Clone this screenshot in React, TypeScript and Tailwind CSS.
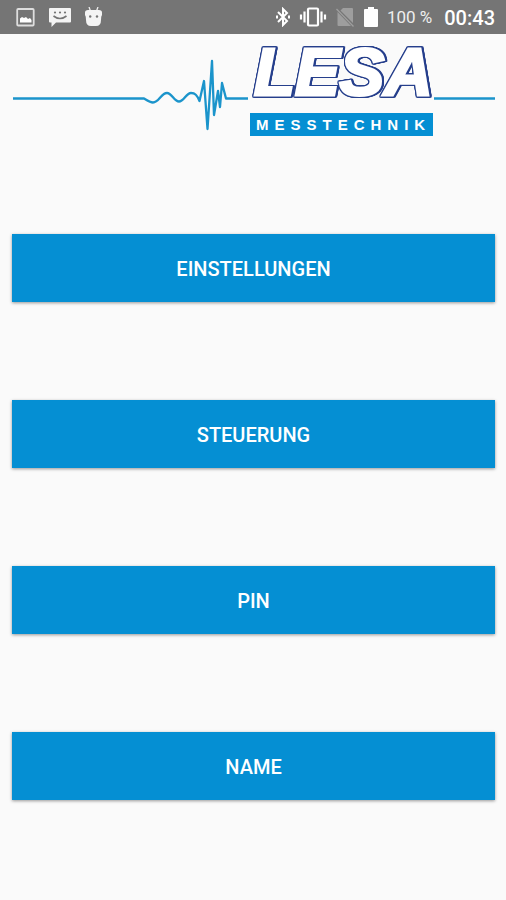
const menuItems = ["Einstellungen", "Steuerung", "PIN", "Name"];

function StatusBar() {
  return (
    <div className="flex h-[34px] items-center justify-between bg-[#757575] pl-4 pr-[11px] text-white">
      {/* notifications */}
      <div className="flex items-center gap-3">
        <svg className="h-5 w-5" viewBox="0 0 20 20" fill="none">
          <rect x="1.2" y="2" width="16.500" height="16.500" rx="1" stroke="#dedede" strokeWidth="1.800" />
          <path d="M4 15.500v-4l2-1.500 2 1 2-1 2 2 2-1 1.500 2v2.500z" fill="#fff" />
        </svg>
        <svg className="h-5 w-6" viewBox="0 0 24 20">
          <path d="M2 1h20a1 1 0 0 1 1 1v12.500a1 1 0 0 1-1 1H8L3.500 20v-4.500H2a1 1 0 0 1-1-1V2a1 1 0 0 1 1-1z" fill="#f4f4f4" />
          <circle cx="7" cy="5.500" r="1.100" fill="#757575" />
          <circle cx="12" cy="5.500" r="1.100" fill="#757575" />
          <circle cx="17" cy="5.500" r="1.100" fill="#757575" />
          <path d="M5.500 9q6.500 5 13 0" fill="none" stroke="#757575" strokeWidth="1.600" />
        </svg>
        <svg className="h-5 w-5" viewBox="0 0 20 20">
          <path d="M5 0l1.500 4M14 0l-1.500 4" stroke="#eee" strokeWidth="1.300" />
          <path d="M1 5.500q0-2.500 3-2.500h11q3 0 3 2.500v2.500q-1 1-1 5 0 6-5 6H7q-5 0-5-6 0-4-1-5z" fill="#f4f4f4" />
          <circle cx="6.200" cy="9.500" r="1.200" fill="#757575" />
          <circle cx="13" cy="9.500" r="1.200" fill="#757575" />
        </svg>
      </div>

      {/* system icons */}
      <div className="flex items-center">
        <svg className="mr-2 h-5 w-4" viewBox="0 0 16 20" fill="none" stroke="#fff" strokeWidth="2">
          <path d="M3 5l9 9-4 4V2l4 4-9 9" />
          <path d="M2 8.500v3M14 8.500v3" />
        </svg>
        <svg className="mr-2 h-5 w-7" viewBox="0 0 28 20" fill="none" stroke="#fff" strokeWidth="2.200">
          <rect x="9" y="1.500" width="10" height="17" rx="1" />
          <path d="M5.500 4.500v11M22.500 4.500v11M2 7.500v5M26 7.500v5" />
        </svg>
        <svg className="mr-2 h-5 w-5" viewBox="0 0 20 20">
          <path d="M8 1h9q1 0 1 1v14L5.500 3.500zM2.500 5l13.500 14H3.500q-1 0-1-1z" fill="#9e9e9e" />
          <path d="M1.500 2l17 17.500" stroke="#9e9e9e" strokeWidth="1.300" />
        </svg>
        <svg className="mr-2 h-5 w-4" viewBox="0 0 16 20">
          <path d="M5 0h6v2h3q1 0 1 1v16q0 1-1 1H2q-1 0-1-1V3q0-1 1-1h3z" fill="#fff" />
        </svg>
        <span className="mr-3 pt-0.5 text-[17px] text-[#eeeeee]">100 %</span>
        <span className="pt-0.5 text-xl font-medium">00:43</span>
      </div>
    </div>
  );
}

function Logo() {
  return (
    <svg className="block w-full" viewBox="0 0 506 106" role="img" aria-label="LESA Messtechnik">
      {/* pulse line */}
      <path
        d="M13 64.500H144C148 67 150 68.500 153 68.500C159 68.500 161 59 167 59C172 59 174 67.500 179 67.500C184 67.500 186 59 191 59C195 59 197 61 199.500 67L204 47L207.500 95L212 27L214 81L218 57L220 73L222 49L226 64.500H248M434 64.500H495"
        fill="none"
        stroke="#1b94cb"
        strokeWidth="2.300"
        strokeLinejoin="round"
      />
      {/* heavy white lettering, outlined by the shadows round it */}
      <text
        x="254"
        y="61"
        className="fill-white stroke-white stroke-[3px] font-['Liberation_Sans',sans-serif] text-[67px] font-bold italic [filter:drop-shadow(1px_0_0_#263f8c)_drop-shadow(-1px_0_0_#263f8c)_drop-shadow(0_1px_0_#263f8c)_drop-shadow(0_-1px_0_#263f8c)_drop-shadow(1px_0_0_#263f8c)]"
      >
        LESA
      </text>
      <rect x="250" y="79" width="183" height="23" fill="#058fd3" />
      <text
        x="256"
        y="96"
        className="fill-white font-['Liberation_Sans',sans-serif] text-[15px] font-bold tracking-[6px]"
      >
        MESSTECHNIK
      </text>
    </svg>
  );
}

export default function App() {
  return (
    <div className="min-h-screen bg-[#fafafa] font-[Roboto,sans-serif]">
      <StatusBar />
      <Logo />
      <main className="flex flex-col gap-[98px] pt-[94px] pr-[11px] pb-24 pl-3">
        {menuItems.map((item) => (
          <button
            key={item}
            type="button"
            className="h-[68px] w-full bg-[#058fd3] pt-0.5 text-xl font-medium text-white uppercase shadow-[0_1px_3px_rgba(0,0,0,0.4)]"
          >
            {item}
          </button>
        ))}
      </main>
    </div>
  );
}
